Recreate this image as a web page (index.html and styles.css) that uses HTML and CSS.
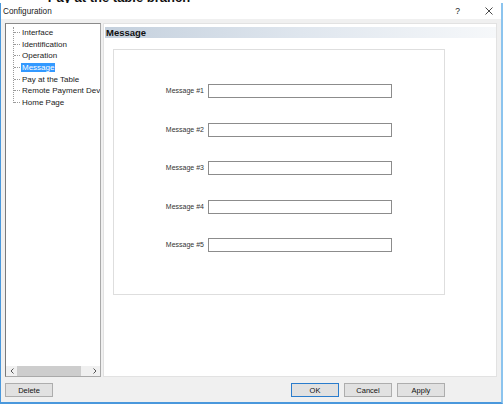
FILE: index.html
```html
<!DOCTYPE html>
<html>
  <head>
    <title>Configuration</title>
    <link rel="stylesheet" href="styles.css">
  </head>
  <body>
    <div class="clip">
      <p class="clip-text">&bull;&nbsp;&nbsp;Pay at the table branch</p>
    </div>

    <div class="window">
      <div class="titlebar">
        <span class="title">Configuration</span>
        <span class="help">?</span>
        <span class="close">
          <svg width="8" height="8" viewBox="0 0 8 8">
            <path d="M0.5 0.5 L7.5 7.5 M7.5 0.5 L0.5 7.5" stroke="#333" stroke-width="0.9" fill="none"/>
          </svg>
        </span>
      </div>

      <div class="client">
        <div class="main">
          <div class="tree">
            <ul class="tree-list">
              <li><span>Interface</span></li>
              <li><span>Identification</span></li>
              <li><span>Operation</span></li>
              <li class="selected"><span>Message</span></li>
              <li><span>Pay at the Table</span></li>
              <li><span>Remote Payment Device</span></li>
              <li><span>Home Page</span></li>
            </ul>
            <div class="hscroll">
              <span class="arrow">
                <svg width="4" height="6" viewBox="0 0 4 6"><path d="M3.5 0.5 L1 3 L3.5 5.5" stroke="#555" fill="none"/></svg>
              </span>
              <div class="track"><div class="thumb"></div></div>
              <span class="arrow">
                <svg width="4" height="6" viewBox="0 0 4 6"><path d="M0.5 0.5 L3 3 L0.5 5.5" stroke="#555" fill="none"/></svg>
              </span>
            </div>
          </div>

          <div class="panel">
            <div class="panel-header">Message</div>
            <div class="box">
              <div class="form">
                <label>Message #1</label><input type="text">
                <label>Message #2</label><input type="text">
                <label>Message #3</label><input type="text">
                <label>Message #4</label><input type="text">
                <label>Message #5</label><input type="text">
              </div>
            </div>
          </div>
        </div>

        <div class="footer">
          <button class="btn">Delete</button>
          <div class="actions">
            <button class="btn btn-default">OK</button>
            <button class="btn">Cancel</button>
            <button class="btn">Apply</button>
          </div>
        </div>
      </div>
    </div>
  </body>
</html>
```

FILE: styles.css
```css
body {
  margin: 0;
  width: 503px;
  height: 404px;
  overflow: hidden;
  background-color: white;
  font-family: "Liberation Sans", Arial, sans-serif;
  color: #1a1a1a;
}
.clip {
  height: 3px;
  overflow: hidden;
}
.clip-text {
  margin: -9px 0 0 36px;
  font-size: 13px;
  line-height: 14px;
  font-weight: bold;
  color: #111;
  white-space: nowrap;
}
.window {
  height: 401px;
  box-sizing: border-box;
  border-left: 1px solid #4a98dc;
  border-right: 2px solid #8cc4ee;
  border-bottom: 2px solid #4a98dc;
  display: flex;
  flex-direction: column;
}
.titlebar {
  height: 16px;
  display: flex;
  align-items: center;
  padding-left: 2px;
  background-color: white;
}
.title {
  font-size: 8.2px;
}
.help {
  margin-left: auto;
  font-size: 8.5px;
  margin-right: 25px;
}
.close {
  display: flex;
  margin-right: 8px;
}
.client {
  flex: 1;
  background-color: #f0f0f0;
  padding: 4px 4px 0 4px;
  display: flex;
  flex-direction: column;
}
.main {
  height: 354px;
  display: flex;
  gap: 2px;
}
.tree {
  width: 96px;
  box-sizing: border-box;
  background-color: white;
  border: 1px solid #a9a9a9;
  border-left-color: #7a7a7a;
  border-top-color: #8a8a8a;
  display: flex;
  flex-direction: column;
}
.tree-list {
  flex: 1;
  list-style: none;
  margin: 3px 0 0 7px;
  padding: 0;
  overflow: hidden;
  white-space: nowrap;
  align-self: flex-start;
  border-left: 1px dotted #9a9a9a;
  height: 76px;
  flex-grow: 0;
  overflow: visible;
}
.tree-list li {
  height: 11.6px;
  display: flex;
  align-items: center;
  font-size: 8px;
  width: 86px;
  overflow: hidden;
}
.tree-list li::before {
  content: '';
  width: 6px;
  flex-shrink: 0;
  border-top: 1px dotted #9a9a9a;
  margin-right: 1px;
}
.tree-list li span {
  padding: 0 1px;
  line-height: 9px;
}
.tree-list li.selected span {
  background-color: #3399ff;
  color: white;
}
.hscroll {
  margin-top: auto;
  height: 10px;
  display: flex;
  align-items: center;
  background-color: #f0f0f0;
}
.arrow {
  width: 11px;
  display: flex;
  justify-content: center;
}
.track {
  flex: 1;
  height: 100%;
}
.thumb {
  width: 64px;
  height: 100%;
  background-color: #cdcdcd;
}
.panel {
  flex: 1;
  background-color: white;
  border: 1px solid #e2e2e2;
  padding-top: 3px;
}
.panel-header {
  height: 11px;
  margin-left: 1px;
  padding-left: 1px;
  font-size: 9.5px;
  line-height: 11px;
  font-weight: bold;
  color: #111;
  background: linear-gradient(to right, #c4d0dd, #dfe6ee 50%, #f6f8fa);
}
.box {
  margin: 11px 0 0 9px;
  width: 332px;
  height: 246px;
  box-sizing: border-box;
  border: 1px solid #dedede;
}
.form {
  padding-top: 34px;
  display: grid;
  grid-template-columns: 90px 184px;
  grid-auto-rows: 14px;
  column-gap: 4px;
  row-gap: 24.5px;
}
.form label {
  font-size: 7px;
  line-height: 14px;
  text-align: right;
  color: #333;
}
.form input {
  height: 14px;
  box-sizing: border-box;
  margin: 0;
  padding: 0;
  border: 1px solid #8c8c8c;
  background-color: white;
}
.footer {
  margin-top: 6px;
  display: flex;
}
.actions {
  margin-left: auto;
  margin-right: 52px;
  display: flex;
  gap: 5px;
}
.btn {
  width: 48px;
  height: 14px;
  padding: 0;
  font-family: "Liberation Sans", Arial, sans-serif;
  font-size: 7.5px;
  color: #111;
  background-color: #e1e1e1;
  border: 1px solid #adadad;
}
.btn-default {
  border-color: #2a7ccc;
}
```
